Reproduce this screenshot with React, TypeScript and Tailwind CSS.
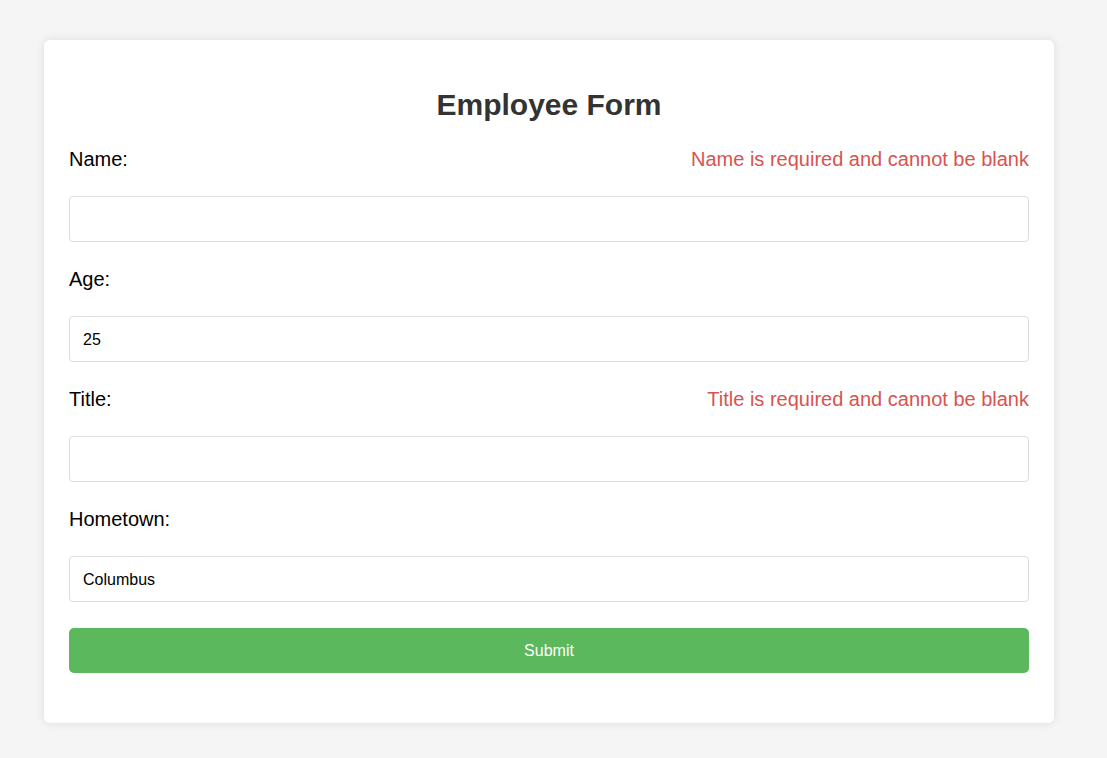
import React, { useState } from 'react';

const fields = [
  { key: 'name', label: 'Name:', value: '', error: 'Name is required and cannot be blank' },
  { key: 'age', label: 'Age:', value: '25', error: '' },
  { key: 'title', label: 'Title:', value: '', error: 'Title is required and cannot be blank' },
  { key: 'hometown', label: 'Hometown:', value: 'Columbus', error: '' },
];

const App = () => {
  const [values, setValues] = useState<Record<string, string>>(
    Object.fromEntries(fields.map((f) => [f.key, f.value]))
  );

  return (
    <div className="min-h-screen bg-[#f5f5f5] pt-10 px-[44px] font-['Liberation_Sans',Arial,sans-serif]">
      <div className="w-[1010px] bg-white rounded-md shadow-[0_0_10px_rgba(0,0,0,0.1)] px-[25px] pt-[25px] pb-[50px]">
        <h2 className="text-center text-[30px] leading-9 font-bold text-[#333] mt-[22px] mb-[22px]">
          Employee Form
        </h2>

        <form className="flex flex-col" onSubmit={(e) => e.preventDefault()}>
          {fields.map((field) => (
            <div key={field.key} className="flex flex-col gap-[23px] mb-[23px]">
              <div className="flex justify-between items-center text-xl leading-7">
                <label className="text-black">{field.label}</label>
                {field.error && <span className="text-[#d9534f]">{field.error}</span>}
              </div>
              <input
                className="h-[46px] w-full border border-[#ddd] rounded px-[13px] pt-px text-base text-black outline-none"
                value={values[field.key]}
                onChange={(e) => setValues({ ...values, [field.key]: e.target.value })}
              />
            </div>
          ))}

          <button
            type="submit"
            className="mt-[3px] h-[45px] w-full bg-[#5cb85c] text-white text-base rounded-[5px]"
          >
            Submit
          </button>
        </form>
      </div>
    </div>
  );
};

export default App;
